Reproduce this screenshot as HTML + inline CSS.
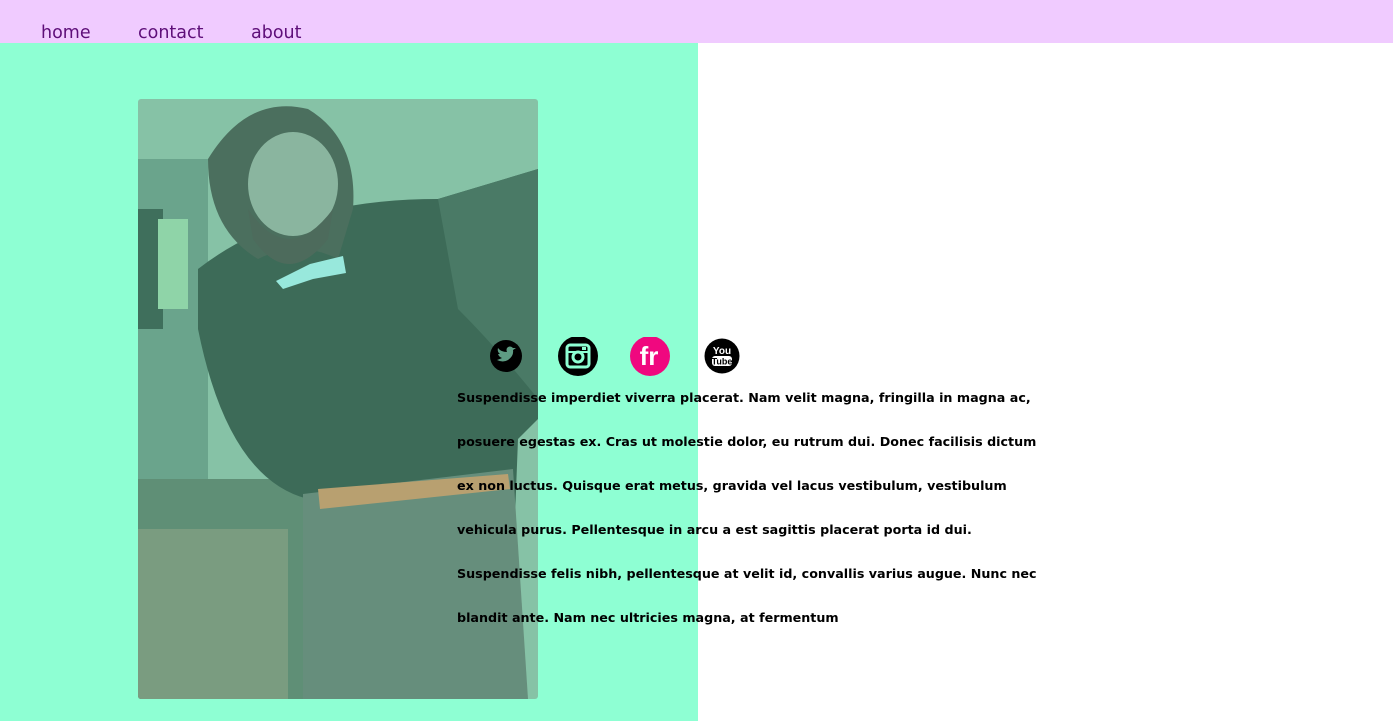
<!DOCTYPE html>
<html><head><meta charset="utf-8"><style>
html,body{margin:0;padding:0;width:1393px;height:721px;overflow:hidden;background:#fff;font-family:Verdana,"DejaVu Sans",sans-serif}
.nav{position:absolute;left:0;top:0;width:1393px;height:43px;background:#f0cbff}
.nav span{position:absolute;top:21px;font-size:17.5px;color:#5e0e79;line-height:24px}
.green{position:absolute;left:0;top:43px;width:698px;height:678px;background:#8effd3}
.photo{position:absolute;left:138px;top:99px;width:400px;height:600px;border-radius:3px;overflow:hidden}
.text{position:absolute;left:457px;top:376px;width:600px;font-weight:bold;font-size:12.7px;line-height:44px;color:#000;white-space:nowrap}
.ic{position:absolute;top:337px}
</style></head><body>
<div class="nav"><span style="left:41px">home</span><span style="left:138px">contact</span><span style="left:251px">about</span></div>
<div class="green"></div>
<div class="photo">
<svg width="400" height="600" viewBox="0 0 400 600">
<rect width="400" height="600" fill="#86c2a6"/>
<rect x="0" y="60" width="70" height="540" fill="#6aa48c"/>
<rect x="0" y="110" width="25" height="120" fill="#3f6f5c"/>
<rect x="20" y="120" width="30" height="90" fill="#8fd4a8"/>
<rect x="0" y="380" width="170" height="220" fill="#5f8f76"/>
<rect x="0" y="430" width="150" height="170" fill="#7a9c80"/>
<path d="M60 170 Q150 100 300 100 L400 70 L400 320 L380 340 L370 600 L170 600 L170 400 Q90 380 60 230 Z" fill="#3d6b58"/>
<path d="M300 100 L400 70 L400 300 Q360 250 320 210 Z" fill="#4a7a66"/>
<path d="M165 395 L375 370 L390 600 L165 600 Z" fill="#668e7c"/>
<path d="M180 390 L370 375 L372 390 L182 410 Z" fill="#b8a070"/>
<path d="M70 60 Q110 -5 170 10 Q220 40 215 110 L200 160 Q160 140 120 160 Q70 130 70 60 Z" fill="#4b6f5e"/>
<ellipse cx="155" cy="85" rx="45" ry="52" fill="#8ab59f"/>
<path d="M110 110 Q150 170 195 110 L190 140 Q150 190 115 140 Z" fill="#4d6b5c"/>
<path d="M138 182 L172 165 L205 157 L208 174 L175 180 L145 190 Z" fill="#98e8dc"/>
</svg>
</div>
<svg class="ic" style="left:489px" width="34" height="36" viewBox="0 0 34 36"><circle cx="17" cy="19" r="16" fill="#000"/><path d="M8 23 Q14 26 19 23 Q25 19 24 13 L27 11 L24 11 Q21 8 18 11 Q17 13 18 15 Q12 15 9 11 Q8 15 11 17 Q10 17 9 17 Q10 20 13 21 Q11 22 8 23Z" fill="#5e9c83"/></svg>
<svg class="ic" style="left:557px" width="42" height="40" viewBox="0 0 42 40"><circle cx="21" cy="19" r="20" fill="#000"/><rect x="10" y="8" width="22" height="22" rx="3" fill="none" stroke="#8effd3" stroke-width="3"/><rect x="10" y="14" width="22" height="2" fill="#8effd3"/><circle cx="21" cy="20" r="5" fill="none" stroke="#8effd3" stroke-width="3"/><rect x="25" y="10" width="4" height="3" fill="#8effd3"/></svg>
<svg class="ic" style="left:629px" width="42" height="40" viewBox="0 0 42 40"><circle cx="21" cy="19" r="20" fill="#f0087f"/><text x="20" y="28" text-anchor="middle" font-family="Liberation Sans,sans-serif" font-weight="bold" font-size="26" fill="#fff">fr</text></svg>
<svg class="ic" style="left:704px" width="38" height="38" viewBox="0 0 38 38"><circle cx="18" cy="19" r="17.5" fill="#000"/><text x="18" y="17" text-anchor="middle" font-family="Liberation Sans,sans-serif" font-weight="bold" font-size="10" fill="#fff">You</text><rect x="8" y="19" width="20" height="10" rx="3" fill="#fff"/><text x="18" y="27.5" text-anchor="middle" font-family="Liberation Sans,sans-serif" font-weight="bold" font-size="9" fill="#000">Tube</text></svg>
<div class="text">Suspendisse imperdiet viverra placerat. Nam velit magna, fringilla in magna ac,<br>posuere egestas ex. Cras ut molestie dolor, eu rutrum dui. Donec facilisis dictum<br>ex non luctus. Quisque erat metus, gravida vel lacus vestibulum, vestibulum<br>vehicula purus. Pellentesque in arcu a est sagittis placerat porta id dui.<br>Suspendisse felis nibh, pellentesque at velit id, convallis varius augue. Nunc nec<br>blandit ante. Nam nec ultricies magna, at fermentum</div>
</body></html>
